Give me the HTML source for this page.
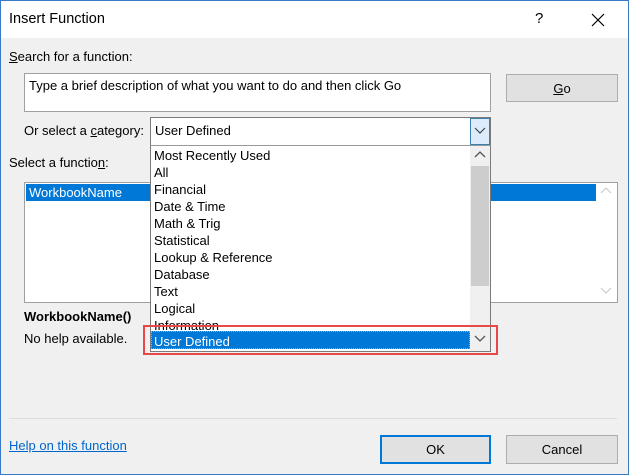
<!DOCTYPE html>
<html><head><meta charset="utf-8"><style>
*{box-sizing:border-box;margin:0;padding:0}
body{width:629px;height:475px;overflow:hidden;background:#f0f0f0;font-family:"Liberation Sans",sans-serif;font-size:13px;color:#000;position:relative}
.a{position:absolute}
.win{left:0;top:0;width:629px;height:475px;border:1px solid #3c78c8}
.title{left:1px;top:1px;width:627px;height:37px;background:#fff}
.t{white-space:nowrap;line-height:16px;font-size:13px}
.btn{background:#e1e1e1;border:1px solid #adadad;text-align:center;font-size:13px}
.item{left:154px;font-size:13px;line-height:17px}
</style></head><body>
<div class="a win"></div>
<div class="a title"></div>
<div class="a t" style="left:9px;top:11px;font-size:14.5px">Insert Function</div>
<div class="a t" style="left:535px;top:11px;font-size:15px">?</div>
<svg class="a" style="left:590px;top:12px" width="16" height="16"><path d="M2 2L14 14M14 2L2 14" stroke="#000" stroke-width="1.2"/></svg>

<div class="a t" style="left:9px;top:49px"><u>S</u>earch for a function:</div>
<div class="a" style="left:24px;top:73px;width:467px;height:39px;background:#fff;border:1px solid #a0a0a0"></div>
<div class="a t" style="left:29px;top:78px">Type a brief description of what you want to do and then click Go</div>
<div class="a btn" style="left:506px;top:74px;width:112px;height:28px;line-height:27px"><u>G</u>o</div>

<div class="a t" style="left:24px;top:123px">Or select a <u>c</u>ategory:</div>
<div class="a" style="left:150px;top:117px;width:341px;height:29px;background:#fff;border:1px solid #7a7a7a"></div>
<div class="a t" style="left:155px;top:123px">User Defined</div>
<div class="a" style="left:470px;top:118px;width:20px;height:27px;background:#dcecfc;border:1px solid #3c7fb1"></div>
<svg class="a" style="left:474px;top:126px" width="12" height="10"><path d="M1 2L6 7L11 2" stroke="#444" fill="none" stroke-width="1.2"/></svg>

<div class="a t" style="left:9px;top:155px">Select a functio<u>n</u>:</div>
<div class="a" style="left:24px;top:182px;width:594px;height:121px;background:#fff;border:1px solid #a0a0a0"></div>
<div class="a" style="left:26px;top:184px;width:570px;height:17px;background:#0078d7"></div>
<div class="a t" style="left:29px;top:185px;color:#fff">WorkbookName</div>
<svg class="a" style="left:600px;top:186px" width="12" height="10"><path d="M1 7L6 2L11 7" stroke="#c8c8c8" fill="none"/></svg>
<svg class="a" style="left:600px;top:286px" width="12" height="10"><path d="M1 2L6 7L11 2" stroke="#c8c8c8" fill="none"/></svg>

<div class="a t" style="left:24px;top:309px;font-weight:bold">WorkbookName()</div>
<div class="a t" style="left:24px;top:331px">No help available.</div>

<div class="a" style="left:150px;top:145px;width:341px;height:207px;background:#fff;border:1px solid #7a7a7a;border-top:1px solid #999"></div>
<div class="a" style="left:470px;top:146px;width:20px;height:205px;background:#f0f0f0"></div>
<div class="a" style="left:471px;top:166px;width:18px;height:120px;background:#cdcdcd"></div>
<svg class="a" style="left:474px;top:150px" width="12" height="10"><path d="M1 7L6 2L11 7" stroke="#555" fill="none" stroke-width="1.3"/></svg>
<svg class="a" style="left:474px;top:334px" width="12" height="10"><path d="M1 2L6 7L11 2" stroke="#555" fill="none" stroke-width="1.3"/></svg>
<div class="a item t" style="top:147px">Most Recently Used</div>
<div class="a item t" style="top:164px">All</div>
<div class="a item t" style="top:181px">Financial</div>
<div class="a item t" style="top:198px">Date &amp; Time</div>
<div class="a item t" style="top:215px">Math &amp; Trig</div>
<div class="a item t" style="top:232px">Statistical</div>
<div class="a item t" style="top:249px">Lookup &amp; Reference</div>
<div class="a item t" style="top:266px">Database</div>
<div class="a item t" style="top:283px">Text</div>
<div class="a item t" style="top:300px">Logical</div>
<div class="a" style="left:151px;top:317px;width:319px;height:13px;overflow:hidden"><div class="t" style="position:absolute;left:3px;top:0;line-height:17px">Information</div></div>
<div class="a" style="left:151px;top:331px;width:319px;height:18px;background:#0078d7;border:1px dotted #e0a040"></div>
<div class="a item t" style="top:333px;color:#fff">User Defined</div>
<div class="a" style="left:143px;top:325px;width:355px;height:30px;border:2px solid #e84848"></div>

<div class="a" style="left:9px;top:418px;width:608px;height:1px;background:#dcdcdc"></div>
<div class="a t" style="left:9px;top:438px;color:#0066cc;text-decoration:underline">Help on this function</div>
<div class="a btn" style="left:380px;top:435px;width:111px;height:29px;border:2px solid #0078d7;line-height:25px">OK</div>
<div class="a btn" style="left:506px;top:435px;width:112px;height:29px;line-height:27px">Cancel</div>
</body></html>
